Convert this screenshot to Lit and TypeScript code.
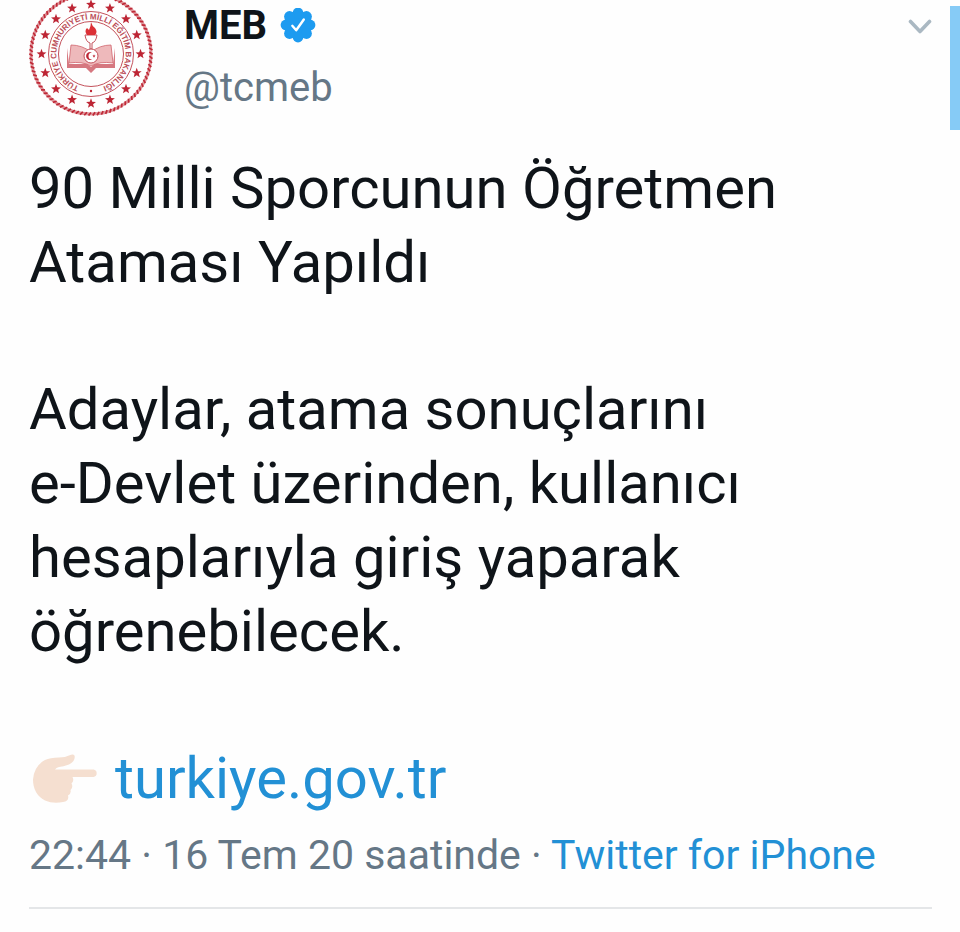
import { LitElement, html, css, svg } from "lit";
import { customElement } from "lit/decorators.js";

const starPoints = (cx: number, cy: number, r: number, turn: number) =>
  Array.from({ length: 10 }, (_, i) => {
    const a = turn + (i * Math.PI) / 5;
    const d = i % 2 ? r * 0.42 : r;
    return `${(cx + d * Math.sin(a)).toFixed(2)},${(cy - d * Math.cos(a)).toFixed(2)}`;
  }).join(" ");

@customElement("ministry-seal")
export class MinistrySeal extends LitElement {
  static styles = css`
    :host { display: block; }
    svg { display: block; width: 100%; height: auto; }
    .line { fill: none; stroke: #c4525c; }
    .rope { fill: none; stroke: #df979d; stroke-width: 3; }
    .twist { fill: none; stroke: #bf2836; stroke-width: 1.7; }
    .star { fill: #bd2534; }
    .legend { font: 700 8px "Liberation Sans", Arial, sans-serif; fill: #bb4c57; }
    .page { fill: #eeb9bb; stroke: #d0646d; stroke-width: 0.8; }
    .cover { fill: #d67880; }
    .flame { fill: #dc3036; }
    .disc { fill: #fff; stroke: #c4525c; stroke-width: 1; }
  `;

  render() {
    const stars = Array.from({ length: 16 }, (_, i) => {
      const a = (i * Math.PI) / 8;
      return svg`<polygon class="star" points=${starPoints(62 + 49.5 * Math.sin(a), 62 - 49.5 * Math.cos(a), 5.2, 0)} />`;
    });
    const twists = Array.from({ length: 90 }, (_, i) => {
      const a = (i * 2 * Math.PI) / 90;
      const b = a + 0.04;
      return svg`<line class="twist" x1=${62 + 58.4 * Math.sin(a)} y1=${62 - 58.4 * Math.cos(a)} x2=${62 + 61.6 * Math.sin(b)} y2=${62 - 61.6 * Math.cos(b)} />`;
    });
    return html`
      <svg viewBox="0 0 124 124" role="img" aria-label="Türkiye Cumhuriyeti Millî Eğitim Bakanlığı">
        <circle class="rope" cx="62" cy="62" r="60" />
        ${twists}
        ${stars}
        <circle class="line" cx="62" cy="62" r="42.5" />
        <circle class="line" cx="62" cy="62" r="32.5" />
        <path id="ring" fill="none" d="M62 96.6A34.6 34.6 0 0 1 62 27.4A34.6 34.6 0 0 1 62 96.6" />
        <text class="legend"><textPath href="#ring" startOffset="50%" text-anchor="middle">TÜRKİYE CUMHURİYETİ MİLLİ EĞİTİM BAKANLIĞI</textPath></text>
        <circle class="star" cx="62" cy="99" r="1.2" />
        <path class="cover" d="M38 56V76H57L62 81L67 76H86V56L84 72H66L62 75L58 72H40Z" />
        <path class="page" d="M42 53Q53 53 62 60Q71 53 82 53L84 71Q71 69 62 74Q53 69 40 71Z" />
        <path class="disc" d="M56 43H68Q67 50 63 51V57H61V51Q57 50 56 43Z" />
        <path class="flame" d="M62 30Q63 34 66 36Q69 40 66 43H58Q55 39 58 36L60 38Q62 34 62 30Z" />
        <circle class="disc" cx="62" cy="64" r="7" />
        <path class="star" d="M63 60.5A4 4 0 1 0 63 67.5A3.1 3.1 0 1 1 63 60.5Z" />
        <polygon class="star" points=${starPoints(65, 64, 1.7, 0)} />
      </svg>
    `;
  }
}

@customElement("app-root")
export class AppRoot extends LitElement {
  static styles = css`
    :host {
      display: block;
      position: relative;
      overflow: hidden;
      min-height: 100vh;
      background: #fefefe;
      color: #0f1419;
      font-family: Roboto, "Noto Sans", sans-serif;
    }
    .tweet { padding: 0 28px 0 29px; }
    .header { display: flex; align-items: flex-start; gap: 31px; }
    .avatar { flex: none; width: 124px; margin-top: -8px; }
    .names { flex: 1; min-width: 0; }
    .name { display: flex; align-items: center; gap: 13px; margin: 0; font-size: 40px; line-height: 52px; font-weight: 700; }
    .badge { width: 36px; height: 36px; }
    .handle { display: block; margin-top: 10px; font-size: 40px; line-height: 52px; color: #657786; text-decoration: none; }
    .menu { border: 0; padding: 0; margin-top: 16px; background: none; cursor: pointer; }
    .menu svg { display: block; width: 24px; height: 20px; }
    .body { margin-top: 35px; font-size: 58px; line-height: 74px; }
    .body p { margin: 0 0 73px; }
    .body .linkline { display: flex; align-items: center; gap: 18px; margin: 0; padding-left: 4px; }
    .hand { width: 64px; height: 49px; }
    a { color: #2290d5; text-decoration: none; }
    .meta { margin: 14px 0 0; padding-bottom: 26px; border-bottom: 2px solid #e4e6e8; font-size: 41px; line-height: 52px; color: #657786; }
    .edge { position: absolute; right: 0; top: 6px; width: 10px; height: 124px; background: #86cbf6; }
  `;

  render() {
    return html`
      <article class="tweet">
        <header class="header">
          <ministry-seal class="avatar"></ministry-seal>
          <div class="names">
            <h1 class="name">
              MEB
              <svg class="badge" viewBox="0 0 36 36" role="img" aria-label="Onaylanmış hesap">
                <g fill="#1d9bf0">
                  <circle cx="18" cy="17" r="14" />
                  ${Array.from({ length: 8 }, (_, i) => {
                    const a = (i * Math.PI) / 4;
                    return svg`<circle cx=${18 + 12 * Math.sin(a)} cy=${17 - 12 * Math.cos(a)} r="5.4" />`;
                  })}
                </g>
                <path d="M12.300 17.800L16.200 22.300L23.800 11.500" fill="none" stroke="#fff" stroke-width="2.400" stroke-linecap="round" stroke-linejoin="round" />
              </svg>
            </h1>
            <a class="handle" href="#tcmeb">@tcmeb</a>
          </div>
          <button class="menu" aria-label="Diğer">
            <svg viewBox="0 0 24 20"><path d="M2.500 5.500L12 15.500L21.500 5.500" fill="none" stroke="#aab8c2" stroke-width="3.600" stroke-linecap="round" stroke-linejoin="round" /></svg>
          </button>
        </header>
        <div class="body">
          <p>90 Milli Sporcunun Öğretmen<br />Ataması Yapıldı</p>
          <p>Adaylar, atama sonuçlarını<br />e-Devlet üzerinden, kullanıcı<br />hesaplarıyla giriş yaparak<br />öğrenebilecek.</p>
          <p class="linkline">
            <svg class="hand" viewBox="0 0 64 49" aria-hidden="true">
              <path fill="#f5dfd0" d="M22 15.500H60.500A3.800 3.800 0 0 1 60.500 23H39.500Q41.500 26.500 38.500 29.500Q40.500 33 37.500 36Q38.500 39.500 35 41.500Q36.500 47 30 48Q20 50 12 46.500Q0 40 0 25.500Q1 12 12 6Q17 3.500 26 3.500Q33 3.500 38 .8Q41.500-.5 41.800 2.800Q41.500 8 36 10.500Q30 12.500 26 13Q23 13.500 22 15.500Z" />
            </svg>
            <a href="#turkiye.gov.tr">turkiye.gov.tr</a>
          </p>
        </div>
        <p class="meta">22:44 · 16 Tem 20 saatinde · <a href="#iphone">Twitter for iPhone</a></p>
      </article>
      <div class="edge"></div>
    `;
  }
}
